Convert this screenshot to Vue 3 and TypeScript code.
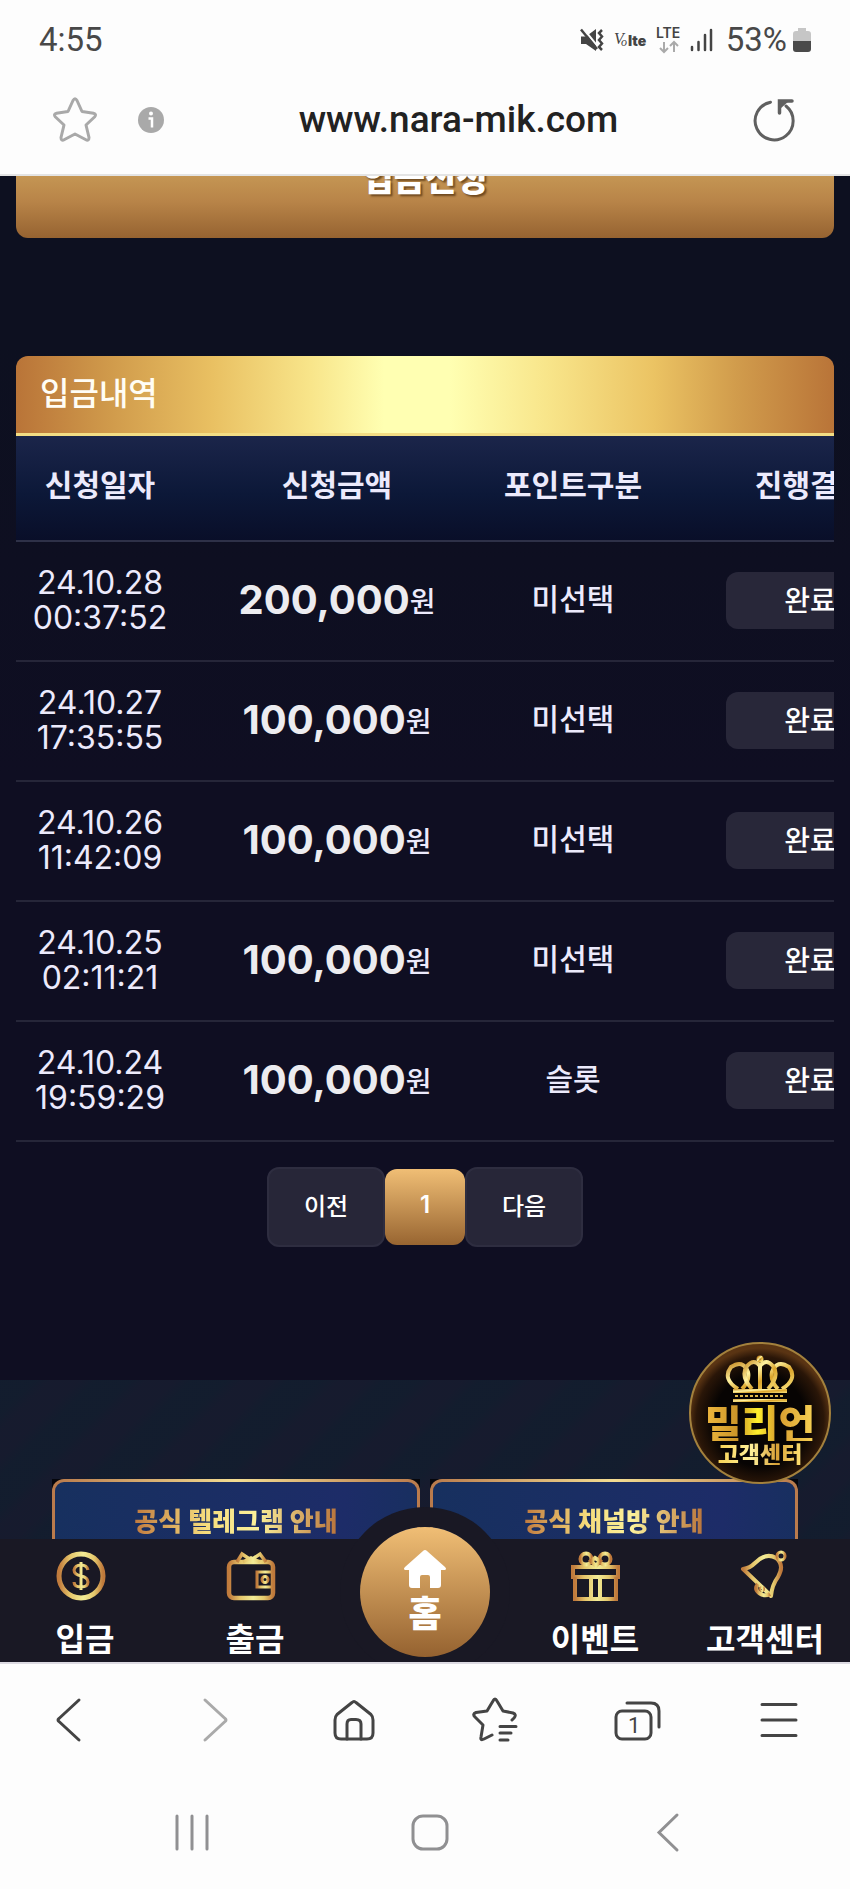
<script setup lang="ts">
import { ref } from 'vue'

interface Deposit {
  date: string
  time: string
  amount: string
  point: string
  result: string
}

const address = ref('www.nara-mik.com')

const columns: string[] = ['신청일자', '신청금액', '포인트구분', '진행결과']

const deposits: Deposit[] = [
  { date: '24.10.28', time: '00:37:52', amount: '200,000', point: '미선택', result: '완료' },
  { date: '24.10.27', time: '17:35:55', amount: '100,000', point: '미선택', result: '완료' },
  { date: '24.10.26', time: '11:42:09', amount: '100,000', point: '미선택', result: '완료' },
  { date: '24.10.25', time: '02:11:21', amount: '100,000', point: '미선택', result: '완료' },
  { date: '24.10.24', time: '19:59:29', amount: '100,000', point: '슬롯', result: '완료' },
]

const notices: string[] = ['공식 텔레그램 안내', '공식 채널방 안내']
</script>

<template>
  <div class="phone">
    <header class="chrome-top">
      <div class="status">
        <span class="clock">4:55</span>
        <div class="status-icons">
          <svg class="mute" width="24" height="24" viewBox="0 0 24 24" aria-label="진동">
            <path d="M1 8.500h5L16 1v22L6 16H1z" fill="#444" />
            <path d="M2 -1L19 20" stroke="#fdfdfd" stroke-width="2" />
            <path d="M1 1.500L17 21" stroke="#444" stroke-width="2.500" />
            <path d="M22 2l-3 3 3 3.500-3 3.500 3 3.500-3 3.500 3 3" fill="none" stroke="#444" stroke-width="2.500" />
          </svg>
          <svg class="volte" width="34" height="20" viewBox="0 0 34 20" aria-label="VoLTE">
            <text x="0" y="14" font-family="Liberation Serif" font-style="italic" font-size="16" fill="#444">V</text>
            <text x="7" y="16" font-family="Liberation Serif" font-style="italic" font-size="12" fill="#444">o</text>
            <text x="14" y="16" font-family="Inter" font-weight="900" font-size="14" fill="#444">lte</text>
          </svg>
          <svg class="lte" width="28" height="28" viewBox="0 0 28 28" aria-label="LTE">
            <text x="1" y="12" font-family="Inter" font-weight="600" font-size="14" fill="#444">LTE</text>
            <path d="M9 16v10M5 22l4 4 4-4M19 26V16M15 20l4-4 4 4" fill="none" stroke="#aaa" stroke-width="2" />
          </svg>
          <svg class="signal" width="24" height="24" viewBox="0 0 24 24" aria-label="신호">
            <path d="M2 19v3M8.500 14v8M15 7v15M21 2v20" stroke="#444" stroke-width="2.500" stroke-linecap="round" />
          </svg>
          <span class="percent">53%</span>
          <svg class="battery" width="18" height="26" viewBox="0 0 18 26" aria-label="배터리">
            <path d="M5 1h8v3h2a3 3 0 0 1 3 3v7H0V7a3 3 0 0 1 3-3h2z" fill="#c6c6c6" />
            <path d="M0 14h18v8a3 3 0 0 1-3 3H3a3 3 0 0 1-3-3z" fill="#4a4a4a" />
          </svg>
        </div>
      </div>
      <div class="address-bar">
        <button type="button" class="plain" aria-label="북마크 추가">
          <svg width="46" height="46" viewBox="0 0 46 46">
            <path d="M21 3.500Q23 0 25 3.500L30 14.500L41.500 16.200Q45 17 42.500 20L34 28L37 40.500Q37 44.500 33.500 42.500L23 37L12.500 42.500Q9 44.500 9 40.500L12 28L3.500 20Q1 17 4.500 16.200L16 14.500Z" fill="none" stroke="#a9a9a9" stroke-width="3" stroke-linejoin="round" />
          </svg>
        </button>
        <button type="button" class="plain info" aria-label="사이트 정보">
          <svg width="28" height="28" viewBox="0 0 28 28">
            <circle cx="14" cy="14" r="13" fill="#a9a9a9" />
            <circle cx="14" cy="7.500" r="2" fill="#fff" />
            <path d="M11.500 12.500H15v9" fill="none" stroke="#fff" stroke-width="2.500" />
          </svg>
        </button>
        <input v-model="address" class="url" type="text" aria-label="주소" />
        <button type="button" class="plain" aria-label="새로고침">
          <svg width="44" height="44" viewBox="0 0 44 44">
            <path d="M18.500 4.200A19 19 0 1 0 34 8" fill="none" stroke="#606060" stroke-width="3" stroke-linecap="round" />
            <path d="M27.500 15V3H40" fill="none" stroke="#606060" stroke-width="3.500" stroke-linecap="round" />
            <path d="M28 3H37L28 11Z" fill="#606060" />
          </svg>
        </button>
      </div>
    </header>

    <main class="site">
      <div class="apply-clip">
        <button type="button" class="apply">입금신청</button>
      </div>

      <section class="history">
        <h2>입금내역</h2>
        <div class="scroller">
          <table>
            <colgroup>
              <col class="c-date" />
              <col class="c-amount" />
              <col class="c-point" />
              <col class="c-result" />
            </colgroup>
            <thead>
              <tr>
                <th v-for="name in columns" :key="name" scope="col">{{ name }}</th>
              </tr>
            </thead>
            <tbody>
              <tr v-for="row in deposits" :key="row.date">
                <td class="date">{{ row.date }}<br />{{ row.time }}</td>
                <td class="amount"><strong>{{ row.amount }}</strong><span>원</span></td>
                <td class="point">{{ row.point }}</td>
                <td><span class="pill">{{ row.result }}</span></td>
              </tr>
            </tbody>
          </table>
        </div>
        <nav class="pager" aria-label="페이지">
          <button type="button" class="step">이전</button>
          <button type="button" class="current" aria-current="page">1</button>
          <button type="button" class="step">다음</button>
        </nav>
      </section>

      <div class="notices">
        <a v-for="notice in notices" :key="notice" href="#" class="notice">
          <span class="frame"><span class="gold-text">{{ notice }}</span></span>
        </a>
      </div>

      <svg class="defs" width="0" height="0" aria-hidden="true">
        <defs>
          <linearGradient id="gold" x1="0" y1="0" x2="1" y2="0">
            <stop offset="0" stop-color="#c07a3c" />
            <stop offset="0.250" stop-color="#e5c56a" />
            <stop offset="0.550" stop-color="#f3ec96" />
            <stop offset="0.800" stop-color="#e4c86c" />
            <stop offset="1" stop-color="#bf793b" />
          </linearGradient>
          <linearGradient id="crown" x1="0" y1="0" x2="1" y2="1">
            <stop offset="0" stop-color="#c9902a" />
            <stop offset="0.350" stop-color="#fff3a0" />
            <stop offset="0.600" stop-color="#dba52c" />
            <stop offset="1" stop-color="#f7e07a" />
          </linearGradient>
        </defs>
      </svg>

      <nav class="tabs" aria-label="메뉴">
        <a href="#" class="tab">
          <svg width="50" height="50" viewBox="0 0 50 50">
            <circle cx="21" cy="25" r="22" fill="none" stroke="url(#gold)" stroke-width="5" />
            <path d="M28 19q-1-5-7-5t-7 5q0 4.500 7 6t7 6q0 5-7 5t-7-5M21 11v28" fill="none" stroke="url(#gold)" stroke-width="3" />
          </svg>
          <span>입금</span>
        </a>
        <a href="#" class="tab">
          <svg width="50" height="50" viewBox="0 0 50 50" fill="none" stroke="url(#gold)" stroke-width="4.500">
            <rect x="-1" y="11" width="44" height="36" rx="5" />
            <path d="M7 11L12 3l9 6 9-6 6 8M13 11l8-4 9 4" stroke-width="3.500" />
            <path d="M42 21H27v15h15" stroke-width="3" />
            <circle cx="35" cy="28.500" r="3" stroke-width="3" />
          </svg>
          <span>출금</span>
        </a>
        <a href="#" class="tab home">
          <span class="disc">
            <svg width="44" height="40" viewBox="0 0 44 40">
              <path d="M20 2q2-2 4 0l18 16q2 2 0 3h-4v15q0 3-3 3h-8V28q0-2-2-2h-6q-2 0-2 2v11H9q-3 0-3-3V21H2q-2-1 0-3z" fill="#fff" />
            </svg>
            <span>홈</span>
          </span>
        </a>
        <a href="#" class="tab">
          <svg width="50" height="50" viewBox="0 0 50 50" fill="none" stroke="url(#gold)" stroke-width="4">
            <rect x="3" y="16" width="45" height="10" />
            <path d="M5 26v22h41V26M21 26v22M30 26v22" />
            <circle cx="16" cy="8" r="5.500" />
            <circle cx="35" cy="8" r="5.500" />
            <path d="M21 10l4-3 5 3-4 5z" />
          </svg>
          <span>이벤트</span>
        </a>
        <a href="#" class="tab">
          <svg width="50" height="50" viewBox="0 0 50 50" fill="none" stroke="url(#gold)" stroke-width="4">
            <path d="M3 18Q10 17 15 12Q26 1 36 7Q45 14 38 26Q32 34 31 45L24 38Z" stroke-linejoin="round" />
            <circle cx="41" cy="5" r="4" stroke-width="3" />
            <path d="M18 33q-4 5 1 9 6 4 11 1" />
            <circle cx="22" cy="38" r="2" stroke-width="2" />
          </svg>
          <span>고객센터</span>
        </a>
      </nav>

      <a href="#" class="badge" aria-label="밀리언 고객센터">
        <svg class="crown" width="68" height="48" viewBox="0 0 68 48" fill="none" stroke="url(#crown)" stroke-width="4">
          <path d="M12 34Q-4 24 5 12Q17 4 22 17Q24 26 16 34M56 34Q72 24 63 12Q51 4 46 17Q44 26 52 34" />
          <path d="M26 34Q14 21 21 11Q28 3 34 11Q40 3 47 11Q54 21 42 34M34 8V35" />
          <circle cx="34" cy="4" r="2" stroke-width="3" />
          <rect x="7" y="34" width="54" height="4" fill="url(#crown)" stroke="none" />
          <rect x="7" y="44" width="54" height="3" fill="url(#crown)" stroke="none" />
          <path d="M9 41H59" stroke="#e0b84a" stroke-width="2" stroke-dasharray="3 2" />
        </svg>
        <span class="brand">밀리언</span>
        <span class="desk">고객센터</span>
      </a>
    </main>

    <footer class="chrome-bottom">
      <nav class="tools" aria-label="브라우저">
        <button type="button" class="plain" aria-label="뒤로">
          <svg width="48" height="48" viewBox="0 0 48 48"><path d="M32 4L12 22.500Q10 24 12 25.500L32 44" /></svg>
        </button>
        <button type="button" class="plain" aria-label="앞으로">
          <svg class="dim" width="48" height="48" viewBox="0 0 48 48"><path d="M17 4L37 22.500Q39 24 37 25.500L17 44" /></svg>
        </button>
        <button type="button" class="plain" aria-label="홈">
          <svg width="48" height="48" viewBox="0 0 48 48">
            <path d="M22 6.500Q24 4.500 26 6.500L41 18.500Q43 20.500 43 24V37Q43 43 37 43H11Q5 43 5 37V24Q5 20.500 7 18.500Z" />
            <path d="M17 43V28Q17 23.500 21 23.500H26Q31 23.500 31 28V43" />
          </svg>
        </button>
        <button type="button" class="plain" aria-label="북마크">
          <svg width="48" height="48" viewBox="0 0 48 48">
            <path d="M20 39L12 43Q8 45 9 41L11 29L3 21Q0 18 4 16.500L15 15L21 5Q23 1 25 5L31 15L41 17Q45 18.500 42 22L40 24" />
            <path d="M28 30.500H44M28 37H39M28 44H36" />
          </svg>
        </button>
        <button type="button" class="plain" aria-label="탭 1개">
          <svg width="48" height="48" viewBox="0 0 48 48">
            <rect x="3" y="15" width="35" height="28" rx="6" />
            <path d="M14 7H38Q46 7 46 15V31" />
            <text x="15" y="37" font-family="Roboto" font-size="22">1</text>
          </svg>
        </button>
        <button type="button" class="plain" aria-label="더보기">
          <svg width="48" height="48" viewBox="0 0 48 48"><path d="M7 8.500H41M7 24H41M7 39.500H41" /></svg>
        </button>
      </nav>
      <nav class="system" aria-label="시스템">
        <button type="button" class="plain" aria-label="최근 앱">
          <svg width="40" height="40" viewBox="0 0 40 40"><path d="M4 4V37M19 4V37M34 4V37" /></svg>
        </button>
        <button type="button" class="plain" aria-label="홈 화면">
          <svg width="40" height="40" viewBox="0 0 40 40"><rect x="4" y="4" width="34" height="33" rx="10" /></svg>
        </button>
        <button type="button" class="plain" aria-label="뒤로 가기">
          <svg width="40" height="40" viewBox="0 0 40 40"><path d="M32 3L14 20.500L32 38" /></svg>
        </button>
      </nav>
    </footer>
  </div>
</template>

<style>
body {
  margin: 0;
  background: #fdfdfd;
}
</style>

<style scoped>
* {
  box-sizing: border-box;
}

.phone {
  display: flex;
  flex-direction: column;
  min-height: 100vh;
  font-family: "Noto Sans CJK KR", sans-serif;
  color: #eceafc;
}

button {
  font-family: inherit;
  cursor: pointer;
  border: 0;
  padding: 0;
}

a {
  color: inherit;
  text-decoration: none;
}

svg {
  display: block;
  flex: none;
  overflow: visible;
}

.plain {
  display: grid;
  place-items: center;
  background: none;
}

/* browser header */
.chrome-top {
  background: #fdfdfd;
  border-bottom: 2px solid #e4e4e4;
  padding-bottom: 14px;
}

.status {
  display: flex;
  align-items: center;
  justify-content: space-between;
  height: 80px;
  padding: 0 39px;
  font: 400 33px/40px Roboto, sans-serif;
  color: #484848;
}

.status-icons {
  display: flex;
  align-items: center;
}

.volte {
  margin-left: 10px;
}

.lte,
.signal {
  margin-left: 7px;
}

.percent {
  margin-left: 12px;
}

.battery {
  margin-left: 6px;
}

.address-bar {
  display: flex;
  align-items: center;
  height: 80px;
  padding: 0 54px 0 52px;
}

.info {
  margin-left: 39px;
}

.url {
  flex: 1;
  min-width: 0;
  padding: 0;
  border: 0;
  outline: 0;
  background: none;
  text-align: center;
  font: 500 37px/44px Roboto, sans-serif;
  color: #222;
}

/* site */
.site {
  position: relative;
  flex: 1;
  display: flex;
  flex-direction: column;
  background: linear-gradient(#0d1020 170px, #0f0e22 600px);
}

.apply-clip {
  display: flex;
  align-items: flex-end;
  height: 62px;
  margin: 0 16px;
  overflow: hidden;
}

.apply {
  width: 100%;
  height: 114px;
  flex: none;
  padding-bottom: 8px;
  border-radius: 12px;
  background: linear-gradient(#f2c079, #c49553 46%, #b88448 68%, #966331);
  color: #fff;
  font-size: 34px;
  font-weight: 900;
  line-height: 44px;
  text-shadow: 2px 2px 2px rgba(60, 30, 0, 0.6);
}

.history {
  margin: 118px 16px 0;
}

h2 {
  margin: 0;
  height: 80px;
  padding: 0 24px;
  border-bottom: 3px solid #f3dd84;
  border-radius: 12px 12px 0 0;
  background: linear-gradient(90deg, #b97438, #d19c4c 12%, #e9c062 24%, #f8e58a 36%, #ffffb2 45%, #ffffb2 53%, #f8e58a 65%, #ebc363 78%, #d19c4c 88%, #b97438);
  font-size: 32px;
  font-weight: 500;
  line-height: 70px;
  color: #fffdf5;
}

.scroller {
  overflow: hidden;
}

table {
  width: 948px;
  table-layout: fixed;
  border-collapse: separate;
  border-spacing: 0;
  text-align: center;
}

.c-date {
  width: 168px;
}

.c-amount {
  width: 306px;
}

.c-point {
  width: 166px;
}

.c-result {
  width: 308px;
}

thead tr {
  background: linear-gradient(#1b254a, #0c1838 55%, #090e28);
}

th {
  height: 106px;
  padding: 0 0 10px;
  border-bottom: 2px solid #2e3148;
  font-size: 30px;
  font-weight: 700;
  line-height: 40px;
  white-space: nowrap;
}

td {
  height: 120px;
  padding: 0 0 2px;
  border-bottom: 2px solid #262639;
  font-size: 30px;
  font-weight: 500;
  line-height: 40px;
  white-space: nowrap;
}

.date {
  font-family: Inter, sans-serif;
  font-size: 32px;
  font-weight: 400;
  line-height: 35px;
}

.point {
  padding-bottom: 8px;
}

.amount strong {
  font: 700 40px/44px Inter, sans-serif;
  color: #ececf0;
}

.amount span {
  font-size: 28px;
  vertical-align: 2px;
}

.pill {
  display: inline-block;
  width: 168px;
  padding-bottom: 2px;
  border-radius: 12px;
  background: #282739;
  color: #fff;
  font-size: 28px;
  line-height: 55px;
}

.pager {
  display: flex;
  align-items: center;
  justify-content: center;
  margin: 25px 0 133px;
}

.step,
.current {
  border-radius: 12px;
  color: #fff;
  font-size: 24px;
  font-weight: 500;
  line-height: 32px;
}

.step {
  width: 118px;
  height: 80px;
  padding-bottom: 4px;
  border: 2px solid #2e2d40;
  background: #272638;
}

.current {
  width: 80px;
  height: 76px;
  padding-bottom: 4px;
  background: linear-gradient(#f0be75, #986531);
  font-family: Inter, sans-serif;
  font-weight: 600;
}

/* notice links, cut by the tab bar */
.notices {
  flex: 1 0 159px;
  height: 159px;
  display: grid;
  grid-template-columns: 1fr 1fr;
  gap: 10px;
  padding: 99px 52px 0;
  overflow: hidden;
  background:
    repeating-linear-gradient(135deg, rgba(18, 30, 46, 0.6) 0 24px, rgba(24, 27, 46, 0.6) 36px 56px, rgba(18, 30, 46, 0.6) 68px),
    #141b2e;
}

.notice {
  height: 60px;
  background: #05060c;
}

.frame {
  display: block;
  height: 84px;
  padding-top: 20px;
  border: 3px solid transparent;
  border-radius: 12px;
  background:
    linear-gradient(90deg, #17305f, #1d2c68 80%, #182f60) padding-box,
    linear-gradient(90deg, #b97a4c, #f3dc92 50%, #b97a4c) border-box;
  text-align: center;
  line-height: 36px;
}

.gold-text {
  font-size: 26px;
  font-weight: 900;
  color: transparent;
  background: linear-gradient(90deg, #c07a3f, #f6dc7c 35%, #fbf09a 60%, #b8733b);
  background-clip: text;
}

.defs {
  position: absolute;
}

/* site tab bar */
.tabs {
  position: relative;
  display: grid;
  grid-template-columns: repeat(5, 1fr);
  height: 123px;
  background: #191824;
}

.tab {
  display: flex;
  flex-direction: column;
  align-items: center;
  padding-top: 12px;
  font-size: 32px;
  font-weight: 700;
  line-height: 40px;
  color: #fff;
  white-space: nowrap;
}

.tab > span:not(.disc) {
  margin-top: 16px;
}

.home {
  position: relative;
}

.disc {
  position: absolute;
  left: 50%;
  bottom: 5px;
  width: 130px;
  height: 130px;
  margin-left: -65px;
  display: flex;
  flex-direction: column;
  align-items: center;
  padding-top: 22px;
  border-radius: 50%;
  background: linear-gradient(#f0be75, #956230);
  box-shadow: 0 0 0 20px #191824;
  clip-path: inset(-20px -20px -5px);
  font-size: 36px;
  font-weight: 900;
  line-height: 44px;
}

/* floating help badge */
.badge {
  position: absolute;
  right: 19px;
  bottom: 178px;
  width: 142px;
  height: 142px;
  display: flex;
  flex-direction: column;
  align-items: center;
  padding-top: 11px;
  border: 2px solid #a3813d;
  border-radius: 50%;
  background: radial-gradient(circle at 50% 55%, #070403 45%, #2a1608 62%, #5a3413 70%);
}

.brand,
.desk {
  color: transparent;
  background-clip: text;
  font-weight: 900;
  white-space: nowrap;
}

.brand {
  background-image: linear-gradient(90deg, #f0b83e, #c99428 30%, #fff02c 48%, #d79c2e 66%, #f8d355);
  font-size: 40px;
  line-height: 38px;
}

.desk {
  background-image: linear-gradient(90deg, #f8d255, #fff09a 40%, #d8a136 70%, #ffe273);
  font-size: 23px;
  line-height: 24px;
}

/* browser footer */
.chrome-bottom {
  border-top: 2px solid #dcdae2;
  background: #fdfdfd;
}

.tools {
  display: grid;
  grid-template-columns: repeat(6, 1fr);
  height: 111px;
  align-items: center;
}

.tools svg {
  fill: none;
  stroke: #444;
  stroke-width: 3;
  stroke-linecap: round;
  stroke-linejoin: round;
}

.tools svg.dim {
  stroke: #aaa;
}

.tools text {
  fill: #444;
  stroke-width: 0;
}

.system {
  display: grid;
  grid-template-columns: repeat(3, 28%);
  justify-content: center;
  align-items: center;
  height: 114px;
  padding-left: 8px;
}

.system svg {
  fill: none;
  stroke: #909092;
  stroke-width: 3;
  stroke-linecap: round;
}
</style>
